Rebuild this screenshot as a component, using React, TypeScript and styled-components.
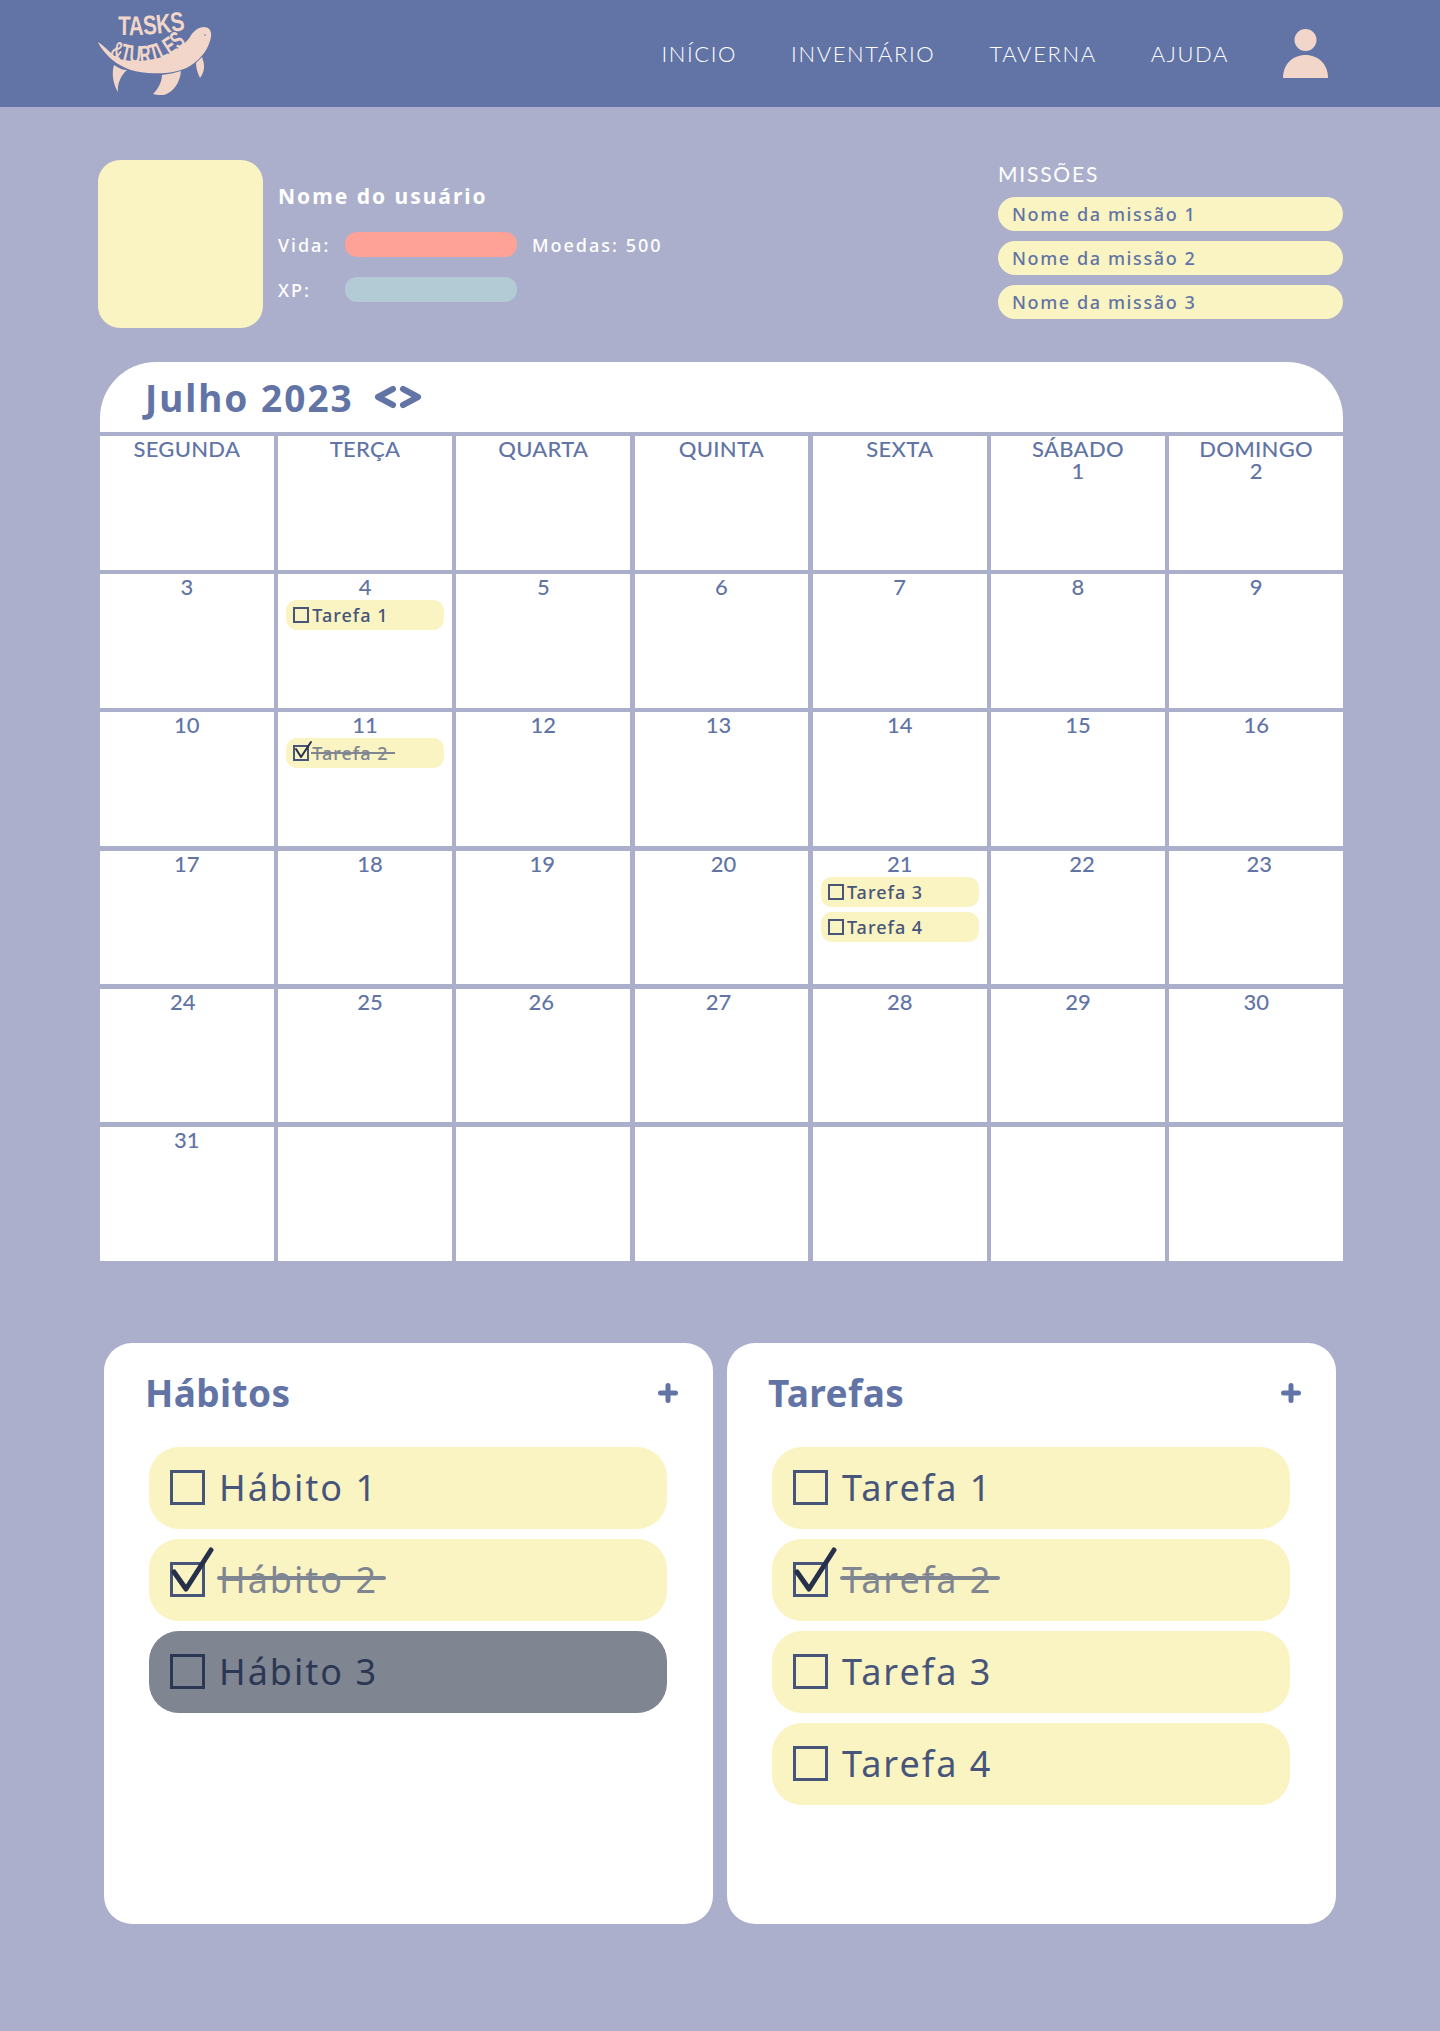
// @ts-nocheck

import styled, { createGlobalStyle } from 'styled-components';

const color = {
    page: '#abafcb',
    header: '#6174a5',
    yellow: '#faf3c2',
    peach: '#f2d6c9',
    salmon: '#fea196',
    teal: '#b2cbd4',
    ink: '#465579',
    dark: '#2c3853',
    done: '#7f8692',
    white: '#ffffff',
};

const bodyFont = '"Noto Sans", "Open Sans", sans-serif';
const capsFont = 'Lato, "Noto Sans", sans-serif';

const GlobalStyle = createGlobalStyle`
    html, body {
        margin: 0;
        padding: 0;
        background: ${color.page};
    }
    * {
        box-sizing: border-box;
    }
`;

const navLinks = ['INÍCIO', 'INVENTÁRIO', 'TAVERNA', 'AJUDA'];
const missions = ['Nome da missão 1', 'Nome da missão 2', 'Nome da missão 3'];
const weekDays = ['SEGUNDA', 'TERÇA', 'QUARTA', 'QUINTA', 'SEXTA'];

// the numbers in the picture are not all perfectly centered
const dayShift = { 13: -3, 18: 5, 19: -1, 20: 2, 22: 4, 23: 3, 24: -4, 25: 5, 26: -2, 27: -3 };

const dayTasks = {
    4: [{ label: 'Tarefa 1' }],
    11: [{ label: 'Tarefa 2', done: true }],
    21: [{ label: 'Tarefa 3' }, { label: 'Tarefa 4' }],
};

const habits = [
    { label: 'Hábito 1' },
    { label: 'Hábito 2', done: true },
    { label: 'Hábito 3', muted: true },
];

const tasks = [
    { label: 'Tarefa 1' },
    { label: 'Tarefa 2', done: true },
    { label: 'Tarefa 3' },
    { label: 'Tarefa 4' },
];

const TurtleLogo = () => (
    <LogoSvg viewBox="0 0 130 107" aria-label="Tasks & Turtles">
        <defs>
            <path id="tasksCurve" d="M28 35 Q 60 36 94 30" />
            <path id="turtlesCurve" d="M19 56 Q 44 68 70 60 Q 86 54 100 40" />
        </defs>
        <path
            fill={color.peach}
            d="M8 42 C14 46 20 52 26 58 C40 63 60 61 72 57 C85 52 95 44 100 37 C103 31 109 27 114 27 C119 27 122 31 121 37 C119 48 112 58 100 66 C88 73 72 74 58 73 C40 72 28 65 20 58 C15 53 10 47 8 42 Z"
        />
        <path fill={color.peach} d="M24 65 C30 69 33 70 37 70 C31 75 27 84 28 92 C24 86 21 74 24 65 Z" />
        <path fill={color.peach} d="M72 75 C78 74 85 73 91 71 C90 82 84 92 74 95 C70 95 66 95 63 94 C68 89 72 82 72 75 Z" />
        <path fill={color.peach} d="M112 57 C115 65 115 71 110 78 C107 72 106 67 106 63 Z" />
        <circle cx="115" cy="35" r="0.8" fill={color.header} />
        <LogoText fontSize="27">
            <textPath href="#tasksCurve" textLength="68" lengthAdjust="spacingAndGlyphs">TASKS</textPath>
        </LogoText>
        <LogoText fontSize="25">
            <textPath href="#turtlesCurve" textLength="84" lengthAdjust="spacingAndGlyphs">&amp;TURTLES</textPath>
        </LogoText>
    </LogoSvg>
);

const UserIcon = () => (
    <svg width="45" height="49" viewBox="0 0 45 49">
        <ellipse cx="22.5" cy="11" rx="11" ry="11" fill={color.peach} />
        <path d="M0 49 C0 35 10 26 22.5 26 C35 26 45 35 45 49 Z" fill={color.peach} />
    </svg>
);

const Check = ({ big = false, checked = false, muted = false }) => (
    <Box $big={big} $muted={muted}>
        {checked && big && (
            <Tick width="44" height="44" viewBox="0 0 44 44" $top={-16} $left={-1}>
                <path d="M2 23 L14 40 L39 1" fill="none" stroke="#27304a" strokeWidth="5" strokeLinecap="round" strokeLinejoin="round" />
            </Tick>
        )}
        {checked && !big && (
            <Tick width="22" height="22" viewBox="0 0 22 22" $top={-6} $left={-1}>
                <path d="M2 8 L7 16 L17 1" fill="none" stroke="#27304a" strokeWidth="2" strokeLinecap="round" strokeLinejoin="round" />
            </Tick>
        )}
    </Box>
);

const DayCell = ({ day = null, label = null, tasks = [] }) => (
    <Cell>
        {label && <WeekLabel>{label}</WeekLabel>}
        {day && <DayNumber style={{ left: dayShift[day] || 0 }}>{day}</DayNumber>}
        {tasks.map((task) => (
            <CalendarTask key={task.label}>
                <Check checked={task.done} />
                <CalendarTaskLabel $done={task.done}>{task.label}</CalendarTaskLabel>
            </CalendarTask>
        ))}
    </Cell>
);

const ListPanel = ({ title, items }) => (
    <Panel>
        <PanelHead>
            <PanelTitle>{title}</PanelTitle>
            <AddIcon viewBox="0 0 20 20">
                <path d="M10 2.5 V17.5 M2.5 10 H17.5" stroke={color.header} strokeWidth="5" strokeLinecap="round" />
            </AddIcon>
        </PanelHead>
        <PanelList>
            {items.map((item) => (
                <ListItem key={item.label} $muted={item.muted}>
                    <Check big checked={item.done} muted={item.muted} />
                    <ListLabel $done={item.done} $muted={item.muted}>{item.label}</ListLabel>
                </ListItem>
            ))}
        </PanelList>
    </Panel>
);

const App = () => {
    const days = [];
    for (let d = 3; d <= 31; d++) days.push(d);

    return (
        <Page>
            <GlobalStyle />
            <Header>
                <TurtleLogo />
                <Nav>
                    {navLinks.map((link) => (
                        <NavLink key={link}>{link}</NavLink>
                    ))}
                    <UserIcon />
                </Nav>
            </Header>

            <Main>
                <ProfileRow>
                    <Avatar />
                    <UserInfo>
                        <UserName>Nome do usuário</UserName>
                        <StatRow>
                            <StatLabel>Vida:</StatLabel>
                            <StatBar $fill={color.salmon} />
                            <Coins>Moedas: 500</Coins>
                        </StatRow>
                        <StatRow>
                            <StatLabel>XP:</StatLabel>
                            <StatBar $fill={color.teal} />
                        </StatRow>
                    </UserInfo>
                    <Missions>
                        <MissionsTitle>MISSÕES</MissionsTitle>
                        {missions.map((mission) => (
                            <Mission key={mission}>{mission}</Mission>
                        ))}
                    </Missions>
                </ProfileRow>

                <Calendar>
                    <CalendarHead>
                        <MonthTitle>Julho 2023</MonthTitle>
                        <MonthArrows viewBox="0 0 48 26">
                            <path d="M19 5 L4 13 L19 21 M29 5 L44 13 L29 21" fill="none" stroke={color.header} strokeWidth="6" strokeLinecap="round" strokeLinejoin="round" />
                        </MonthArrows>
                    </CalendarHead>
                    <CalendarGrid>
                        {weekDays.map((label) => (
                            <DayCell key={label} label={label} />
                        ))}
                        <Cell>
                            <WeekLabel>SÁBADO<br />1</WeekLabel>
                        </Cell>
                        <Cell>
                            <WeekLabel>DOMINGO<br />2</WeekLabel>
                        </Cell>
                        {days.map((d) => (
                            <DayCell key={d} day={d} tasks={dayTasks[d] || []} />
                        ))}
                        {[1, 2, 3, 4, 5, 6].map((n) => (
                            <Cell key={n} />
                        ))}
                    </CalendarGrid>
                </Calendar>

                <Panels>
                    <ListPanel title="Hábitos" items={habits} />
                    <ListPanel title="Tarefas" items={tasks} />
                </Panels>
            </Main>
        </Page>
    );
};

const Page = styled.div`
    width: 1440px;
    height: 2031px;
    background: ${color.page};
    overflow: hidden;
`;

const Header = styled.header`
    height: 107px;
    padding: 0 112px 0 90px;
    background: ${color.header};
    display: flex;
    align-items: center;
    justify-content: space-between;
`;

const LogoSvg = styled.svg`
    width: 130px;
    height: 107px;
    display: block;
`;

const LogoText = styled.text`
    font-family: "Liberation Sans", sans-serif;
    font-weight: 700;
    fill: ${color.peach};
`;

const Nav = styled.nav`
    display: flex;
    align-items: center;
    gap: 54px;
`;

const NavLink = styled.a`
    font-family: ${capsFont};
    font-size: 22px;
    font-weight: 300;
    letter-spacing: 1.6px;
    color: ${color.white};
`;

const Main = styled.main`
    padding: 0 97px 0 98px;
`;

const ProfileRow = styled.section`
    margin-top: 53px;
    height: 168px;
    display: flex;
`;

const Avatar = styled.div`
    width: 165px;
    height: 168px;
    border-radius: 22px;
    background: ${color.yellow};
`;

const UserInfo = styled.div`
    margin-left: 15px;
    padding-top: 21px;
    width: 720px;
`;

const UserName = styled.div`
    margin-bottom: 21px;
    font-family: ${bodyFont};
    font-size: 21px;
    line-height: 30px;
    font-weight: 700;
    letter-spacing: 2px;
    color: ${color.white};
`;

const StatRow = styled.div`
    height: 25px;
    margin-bottom: 20px;
    display: flex;
    align-items: center;
    font-family: ${bodyFont};
    font-size: 18px;
    font-weight: 500;
    letter-spacing: 2px;
    color: ${color.white};
`;

const StatLabel = styled.span`
    width: 67px;
`;

const StatBar = styled.div`
    width: 172px;
    height: 25px;
    border-radius: 12px;
    background: ${(p) => p.$fill};
`;

const Coins = styled.span`
    margin-left: 15px;
`;

const Missions = styled.aside`
    width: 345px;
`;

const MissionsTitle = styled.div`
    height: 37px;
    font-family: ${capsFont};
    font-size: 21px;
    line-height: 28px;
    letter-spacing: 1.8px;
    color: ${color.white};
`;

const Mission = styled.div`
    height: 34px;
    margin-bottom: 10px;
    padding-left: 14px;
    border-radius: 17px;
    background: ${color.yellow};
    font-family: ${bodyFont};
    font-size: 18px;
    font-weight: 500;
    line-height: 34px;
    letter-spacing: 1.6px;
    color: ${color.header};
`;

const Calendar = styled.section`
    margin: 34px 0 0 2px;
`;

const CalendarHead = styled.div`
    height: 70px;
    margin-bottom: 4px;
    padding-left: 45px;
    border-radius: 56px 56px 0 0;
    background: ${color.white};
    display: flex;
    align-items: center;
`;

const MonthTitle = styled.h1`
    margin: 0 20px 0 0;
    font-family: ${bodyFont};
    font-size: 37px;
    font-weight: 700;
    letter-spacing: 2px;
    color: ${color.header};
`;

const MonthArrows = styled.svg`
    width: 48px;
    height: 26px;
`;

const CalendarGrid = styled.div`
    display: grid;
    grid-template-columns: repeat(7, 1fr);
    grid-auto-rows: 133.6px;
    gap: 4.6px;
`;

const Cell = styled.div`
    background: ${color.white};
    text-align: center;
    font-family: ${capsFont};
    font-size: 22px;
    font-weight: 500;
    color: ${color.header};
`;

const WeekLabel = styled.div`
    padding-top: 2px;
    line-height: 22px;
    letter-spacing: 0.3px;
`;

const DayNumber = styled.div`
    position: relative;
    height: 26px;
    padding-top: 1px;
    line-height: 24px;
`;

const CalendarTask = styled.div`
    height: 30px;
    margin: 0 8px 5px 8px;
    padding-left: 7px;
    border-radius: 11px;
    background: ${color.yellow};
    display: flex;
    align-items: center;
`;

const CalendarTaskLabel = styled.span`
    position: relative;
    margin-left: 3px;
    font-family: ${bodyFont};
    font-size: 18px;
    letter-spacing: 1px;
    color: ${(p) => (p.$done ? color.done : color.ink)};
    ${(p) => p.$done && `
        &::after {
            content: '';
            position: absolute;
            left: -1px;
            right: -7px;
            top: calc(50% - 1px);
            height: 2px;
            background: ${color.done};
        }
    `}
`;

const Box = styled.span`
    position: relative;
    display: block;
    flex: none;
    width: ${(p) => (p.$big ? '35px' : '16px')};
    height: ${(p) => (p.$big ? '35px' : '16px')};
    border: ${(p) => (p.$big ? '3px' : '2px')} solid ${(p) => (p.$muted ? color.dark : color.ink)};
`;

const Tick = styled.svg`
    position: absolute;
    top: ${(p) => p.$top}px;
    left: ${(p) => p.$left}px;
    overflow: visible;
`;

const Panels = styled.section`
    margin: 82px 7px 0 6px;
    display: flex;
    gap: 14px;
`;

const Panel = styled.div`
    width: 609px;
    height: 581px;
    padding: 25px 46px 0 41px;
    border-radius: 28px;
    background: ${color.white};
`;

const PanelHead = styled.div`
    height: 50px;
    margin-right: -11px;
    display: flex;
    align-items: center;
    justify-content: space-between;
`;

const PanelTitle = styled.h2`
    margin: 0;
    font-family: ${bodyFont};
    font-size: 37px;
    font-weight: 700;
    letter-spacing: 0.4px;
    color: ${color.header};
`;

const AddIcon = styled.svg`
    width: 20px;
    height: 20px;
`;

const PanelList = styled.div`
    margin: 29px 0 0 4px;
    display: flex;
    flex-direction: column;
    gap: 10px;
`;

const ListItem = styled.div`
    height: 82px;
    padding-left: 21px;
    border-radius: 30px;
    background: ${(p) => (p.$muted ? color.done : color.yellow)};
    display: flex;
    align-items: center;
`;

const ListLabel = styled.span`
    position: relative;
    margin-left: 14px;
    font-family: ${bodyFont};
    font-size: 36px;
    letter-spacing: 2px;
    color: ${(p) => (p.$done ? color.done : p.$muted ? color.dark : color.ink)};
    ${(p) => p.$done && `
        &::after {
            content: '';
            position: absolute;
            left: -2px;
            right: -8px;
            top: calc(50% - 4px);
            height: 4px;
            border-radius: 2px;
            background: ${color.done};
        }
    `}
`;

export default App;
